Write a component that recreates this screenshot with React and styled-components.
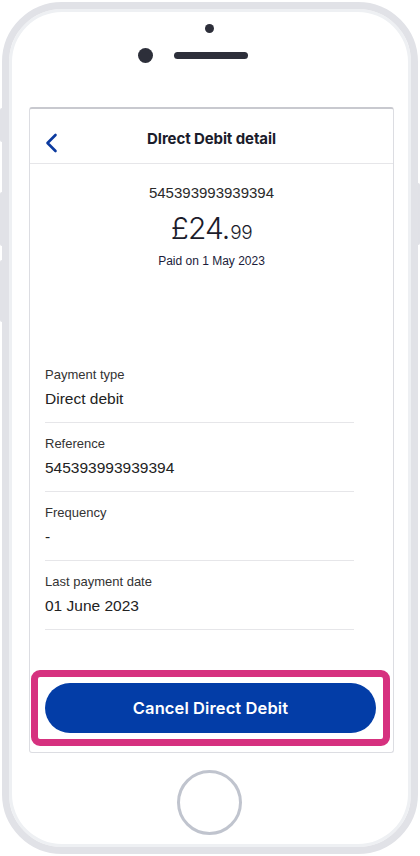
import styled, { createGlobalStyle } from "styled-components";

const GlobalStyle = createGlobalStyle`
  html, body {
    margin: 0;
    padding: 0;
    background: #ffffff;
  }
  body {
    font-family: "Liberation Sans", Arial, sans-serif;
  }
`;

const Page = styled.div`
  width: 420px;
  height: 856px;
  padding: 2px 2px 0 2px;
  box-sizing: border-box;
  position: relative;
`;

const SideButton = styled.div`
  position: absolute;
  ${(p) => (p.$right ? "right: 0;" : "left: 0;")}
  top: ${(p) => p.$top}px;
  height: ${(p) => p.$height}px;
  width: 4px;
  background: #e1e2e7;
  border-radius: 2px;
`;

const Phone = styled.div`
  position: relative;
  width: 416px;
  height: 852px;
  box-sizing: border-box;
  border: 7px solid #e1e2e7;
  border-radius: 60px;
  box-shadow: inset 0 0 0 3px #eef0f3;
  background: #ffffff;
  display: flex;
  flex-direction: column;
`;

const TopBar = styled.div`
  height: 98px;
  position: relative;
  flex-shrink: 0;
`;

const Camera = styled.div`
  position: absolute;
  left: ${(p) => p.$x}px;
  top: ${(p) => p.$y}px;
  width: ${(p) => p.$size}px;
  height: ${(p) => p.$size}px;
  border-radius: 50%;
  background: #2d2f3a;
`;

const Speaker = styled.div`
  position: absolute;
  left: 165px;
  top: 43px;
  width: 74px;
  height: 7px;
  border-radius: 4px;
  background: #2d2f3a;
`;

const Screen = styled.div`
  margin-left: 20px;
  width: 365px;
  height: 646px;
  box-sizing: border-box;
  border: 1px solid #dcdde2;
  border-top: 2px solid #c8c9cf;
  border-radius: 3px;
  display: flex;
  flex-direction: column;
  flex-shrink: 0;
  background: #fff;
`;

const Header = styled.div`
  height: 55px;
  box-sizing: border-box;
  padding-top: 5px;
  border-bottom: 1px solid #e6e6e9;
  display: flex;
  align-items: center;
  justify-content: center;
  position: relative;
  flex-shrink: 0;
`;

const BackButton = styled.button`
  position: absolute;
  left: 14px;
  top: 24px;
  padding: 0;
  border: 0;
  background: none;
  width: 16px;
  height: 20px;
  display: flex;
`;

const Title = styled.h1`
  margin: 0;
  font-family: Inter, "Liberation Sans", sans-serif;
  font-weight: 700;
  font-size: 15px;
  color: #1b1c2b;
  letter-spacing: -0.1px;
`;

const Summary = styled.div`
  display: flex;
  flex-direction: column;
  align-items: center;
  padding-top: 20px;
`;

const RefNumber = styled.div`
  font-size: 15px;
  line-height: 18px;
  color: #2a2a2a;
`;

const Amount = styled.div`
  margin-top: 9px;
  font-family: Inter, "Liberation Sans", sans-serif;
  font-weight: 300;
  color: #1b1c2b;
  font-size: 30px;
  line-height: 34px;
  letter-spacing: -1px;
`;

const Pence = styled.span`
  font-size: 19px;
  letter-spacing: -0.5px;
  margin-left: 1px;
`;

const PaidOn = styled.div`
  margin-top: 4px;
  font-size: 12px;
  line-height: 15px;
  color: #1b1c3a;
`;

const FieldList = styled.div`
  margin-top: 85px;
  padding-left: 15px;
  width: 309px;
`;

const Field = styled.div`
  padding: 13px 0 14px 0;
  border-bottom: 1px solid #e6e6e9;
`;

const Label = styled.div`
  font-size: 13px;
  line-height: 16px;
  color: #333;
`;

const Value = styled.div`
  margin-top: 7px;
  font-size: 15.5px;
  line-height: 18px;
  color: #222;
`;

const Footer = styled.div`
  margin-top: auto;
  padding: 0 17px 19px 15px;
  position: relative;
`;

const CancelButton = styled.button`
  width: 100%;
  height: 50px;
  border: 0;
  border-radius: 25px;
  background: #033da7;
  color: #fff;
  font-family: Inter, "Liberation Sans", sans-serif;
  font-weight: 600;
  font-size: 16.5px;
  letter-spacing: 0.1px;
  position: relative;
`;

const Highlight = styled.div`
  position: absolute;
  left: 1px;
  right: 3px;
  top: -13px;
  bottom: 6px;
  border: 7px solid #d6317f;
  border-radius: 9px;
  pointer-events: none;
`;

const HomeArea = styled.div`
  flex: 1;
  display: flex;
  align-items: center;
  justify-content: center;
  padding-right: 2px;
`;

const HomeButton = styled.div`
  width: 59px;
  height: 59px;
  border: 3px solid #c0c4ce;
  border-radius: 50%;
  margin-top: 4px;
`;

const fields = [
  { label: "Payment type", value: "Direct debit" },
  { label: "Reference", value: "545393993939394" },
  { label: "Frequency", value: "-" },
  { label: "Last payment date", value: "01 June 2023" },
];

export default function App() {
  return (
    <Page>
      <GlobalStyle />
      <SideButton $top={108} $height={34} />
      <SideButton $top={192} $height={54} />
      <SideButton $top={260} $height={62} />
      <SideButton $right $top={183} $height={62} />
      <Phone>
        <TopBar>
          <Camera $x={196} $y={15} $size={9} />
          <Camera $x={129} $y={39} $size={15} />
          <Speaker />
        </TopBar>
        <Screen>
          <Header>
            <BackButton aria-label="Back">
              <svg width="16" height="20" viewBox="0 0 16 20">
                <path
                  d="M11.5 2 L3.5 10 L11.5 18"
                  fill="none"
                  stroke="#0b3a9f"
                  strokeWidth="2.6"
                  strokeLinecap="round"
                  strokeLinejoin="round"
                />
              </svg>
            </BackButton>
            <Title>DIrect Debit detail</Title>
          </Header>
          <Summary>
            <RefNumber>545393993939394</RefNumber>
            <Amount>
              £24.<Pence>99</Pence>
            </Amount>
            <PaidOn>Paid on 1 May 2023</PaidOn>
          </Summary>
          <FieldList>
            {fields.map((f) => (
              <Field key={f.label}>
                <Label>{f.label}</Label>
                <Value>{f.value}</Value>
              </Field>
            ))}
          </FieldList>
          <Footer>
            <CancelButton>Cancel Direct Debit</CancelButton>
            <Highlight />
          </Footer>
        </Screen>
        <HomeArea>
          <HomeButton />
        </HomeArea>
      </Phone>
    </Page>
  );
}
